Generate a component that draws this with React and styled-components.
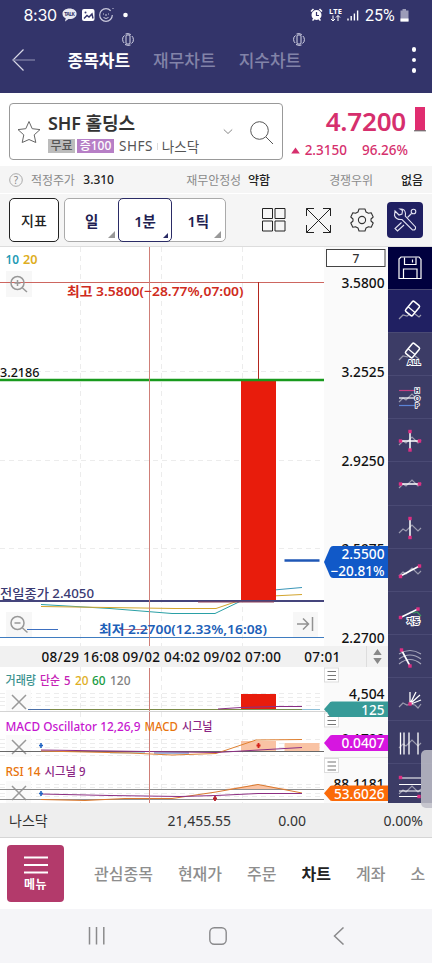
import React, { useState } from 'react'
import styled, { createGlobalStyle } from 'styled-components';

const GlobalStyle = createGlobalStyle`
  * { box-sizing: border-box; }
  body {
    margin: 0;
    background: #fff;
    font-family: "Noto Sans", "Noto Sans CJK KR", sans-serif;
    overflow: hidden;
  }
  button { font-family: inherit; padding: 0; }
`;

const tabs = [
    { name: "종목차트", live: true },
    { name: "재무차트", live: false },
    { name: "지수차트", live: true },
];
const menus = ["관심종목", "현재가", "주문", "차트", "계좌", "소"];

// text inside a chart, squeezed to the width w when given
const Label = ({ x, y, w, size = 12, fill = "#111", weight = 500, end, children }) => (
    <text
        x={x}
        y={y}
        fill={fill}
        fontSize={size}
        fontWeight={weight}
        textAnchor={end ? "end" : "start"}
        textLength={w}
        lengthAdjust="spacingAndGlyphs"
    >
        {children}
    </text>
)

const Grid = ({ xs = [80.5, 161.5, 242.5], ys = [], top, bottom }) => (
    <g stroke="#ececec" strokeDasharray="5 4">
        {xs.map((x) => <path key={x} d={`M${x} ${top}V${bottom}`} />)}
        {ys.map((y) => <path key={y} d={`M0 ${y}H324`} />)}
    </g>
)

const Cross = ({ y }) => (
    <g>
        <rect x="6" y={y - 12} width="25" height="22" fill="#fafafa" />
        <path d={`M12 ${y - 7}l14 14m0 -14l-14 14`} stroke="#999" strokeWidth="1.5" fill="none" />
    </g>
)

const PaneMenu = ({ y }) => (
    <g>
        <rect x="324.5" y={y - 7.5} width="14" height="14" fill="#fff" stroke="#ddd" />
        <path d={`M327.5 ${y - 4}h8.5m-8.5 4h8.5m-8.5 4h8.5`} stroke="#777" strokeWidth="1.2" />
    </g>
)

const Tag = ({ y, h, fill }) => (
    <path d={`M324 ${y + h / 2}L329 ${y + 2}Q330 ${y} 332 ${y}H388V${y + h}H332Q330 ${y + h} 329 ${y + h - 2}Z`} fill={fill} />
)

const RotateIcon = () => (
    <svg width="12" height="13" viewBox="0 0 12 13" fill="none" stroke="#d5d5e6" strokeWidth="1">
        <rect x="4" y="2" width="4" height="9" rx="1" />
        <path d="M2.500 2.500Q.4 4 .6 6.500T2.200 10M9.500 10.500Q11.600 9 11.400 6.500T9.800 3M3.500 1Q6 0 8.800 1.500M3 11.500Q6 13 8.500 12" />
    </svg>
)

const PricePane = () => (
    <Pane height={399} viewBox="0 247 388 399">
        <rect x="324" y="247" width="64" height="399" fill="#fafafa" />
        <Grid ys={[371.5, 460.5, 548.5]} top={247} bottom={646} />
        <rect x="6" y="271" width="26" height="26" fill="#f7f7f7" />
        <path d="M0 282.500H324" stroke="#cd6660" />
        <rect x="241" y="381" width="35" height="219.500" fill="#e81c0c" />
        <path d="M258.500 282V380" stroke="#b3261e" />
        <path d="M0 380H324" stroke="#189a1d" strokeWidth="2.400" />
        <path d="M0 637.500H324" stroke="#3f7cc0" />
        <path d="M28 629.500H58" stroke="#3d6fc0" />
        <path d="M120 629.500H148" stroke="#c4687a" />
        <path d="M41 604.500L110 608.500L172 613.500H215L241 601" stroke="#2aa0a6" fill="none" />
        <path d="M41 606.500L175 608.500H216L238 601" stroke="#d3a52e" fill="none" />
        <path d="M276 589.800L302 587.500" stroke="#3a96b8" fill="none" />
        <path d="M276 595.800L302 594.500" stroke="#d3a52e" fill="none" />
        <path d="M0 601H324" stroke="#45457c" strokeWidth="1.800" />
        <path d="M198 602H274" stroke="#914058" />
        <path d="M284.500 560.500H319.500" stroke="#1f57b6" strokeWidth="2.600" />
        <path d="M149.500 247V646" stroke="#cf7f78" />

        <Label x="5.500" y="264" w="13.500" size="12" weight="600" fill="#1f9bb5">10</Label>
        <Label x="23" y="264" w="14.500" size="12" weight="600" fill="#deae22">20</Label>
        <Label x="67" y="296" w="176.500" size="13" weight="600" fill="#cf2b20">최고 3.5800(−28.77%,07:00)</Label>
        <Label x="0" y="377" w="39.500" size="12">3.2186</Label>
        <Label x="0" y="597.500" w="94" size="13" weight="500" fill="#3a3a72">전일종가 2.4050</Label>
        <Label x="99" y="634" w="168" size="13" weight="600" fill="#1d5fb8">최저 2.2700(12.33%,16:08)</Label>

        {/* zoom in / zoom out / go to last */}
        <g fill="none" stroke="#989898" strokeWidth="1.500">
            <circle cx="17.500" cy="283" r="6.500" />
            <path d="M14.500 283h6M17.500 280v6M22.500 288l4.500 4" />
        </g>
        <rect x="6" y="612" width="26" height="26" fill="#f7f7f7" />
        <path d="M0 637.500H32" stroke="#3f7cc0" />
        <path d="M27 629.500H32" stroke="#3d6fc0" />
        <g fill="none" stroke="#989898" strokeWidth="1.500">
            <circle cx="17.500" cy="623" r="6.500" />
            <path d="M14.500 623h6M22.500 628l5 4.500" />
        </g>
        <rect x="293" y="612" width="25" height="25" fill="#f7f7f7" />
        <path d="M297 624H308M303 618.500L308.500 624L303 629.500M312.500 617V631" fill="none" stroke="#929292" strokeWidth="1.500" />

        <rect x="326.500" y="249.500" width="58.500" height="17" fill="#fff" stroke="#444" />
        <Label x="352.500" y="262.500" size="12" fill="#333">7</Label>
        <Label x="384.500" y="287.500" w="43" size="13.500" end>3.5800</Label>
        <Label x="384.500" y="376.500" w="43" size="13.500" end>3.2525</Label>
        <Label x="384.500" y="465.500" w="43" size="13.500" end>2.9250</Label>
        <Label x="384.500" y="553.500" w="43" size="13.500" end>2.5975</Label>
        <Label x="384.500" y="642.500" w="43" size="13.500" end>2.2700</Label>
        <path d="M324 562L330 548Q331 546 333 546H388V578H333Q331 578 330 576Z" fill="#1159c8" />
        <Label x="384.500" y="558.500" w="43" size="13.500" fill="#fff" end>2.5500</Label>
        <Label x="384.500" y="575.500" w="54" size="13.500" fill="#fff" end>−20.81%</Label>
    </Pane>
)

const VolumePane = () => (
    <Pane height={45} viewBox="0 667 388 45">
        <rect x="324" y="667" width="64" height="45" fill="#fafafa" />
        <Grid ys={[693.5, 697.5, 701.5, 705.5]} top={667} bottom={712} />
        <Cross y={702} />
        <path d="M28 709.500H241" stroke="#7c8b47" />
        <path d="M28 709.500H50" stroke="#4a6fa8" />
        <path d="M276 709.500H320" stroke="#8ec0d8" />
        <rect x="241" y="694" width="35" height="15" fill="#e81c0c" />
        <path d="M218 709L241 707.500L276 706.500H302" stroke="#8a2f86" fill="none" />
        <path d="M241 709.500H302" stroke="#758f53" />
        <path d="M149.500 668V712" stroke="#cf7f78" />
        <path d="M0 711.500H388" stroke="#d4d4d4" />
        <Label x="5.500" y="685" w="30.500" size="12" fill="#3c9290">거래량</Label>
        <Label x="40" y="685" w="20" size="12" fill="#c521b5">단순</Label>
        <Label x="64" y="685" w="6.500" size="12" fill="#c521b5">5</Label>
        <Label x="75" y="685" w="13.500" size="12" fill="#deae22">20</Label>
        <Label x="92" y="685" w="13.500" size="12" fill="#159a3e">60</Label>
        <Label x="110" y="685" w="20.500" size="12" fill="#808080">120</Label>
        <PaneMenu y={675.5} />
        <Label x="384.500" y="698.500" w="35.500" size="13.500" end>4,504</Label>
        <Tag y={701.5} h={15.5} fill="#379b98" />
    </Pane>
)

const MacdPane = () => (
    <Pane height={45} viewBox="0 712 388 45">
        <rect x="324" y="712" width="64" height="45" fill="#fafafa" />
        <Grid ys={[739.5, 743.5, 747.5, 755.5]} top={712} bottom={757} />
        <Cross y={747} />
        <rect x="241" y="741" width="35" height="10.500" fill="#f9c3a4" />
        <rect x="284.500" y="743" width="35" height="8.500" fill="#f9c3a4" />
        <rect x="110" y="752" width="35" height="1.500" fill="#a8cbd6" />
        <rect x="154" y="752" width="35" height="2" fill="#9fb3da" />
        <path d="M0 751.500H324" stroke="#686868" />
        <path d="M41 751L130 753L172 755L216 753.500L256 740L302 739.500" stroke="#df8030" fill="none" />
        <path d="M41 750L216 752.500L302 747.500" stroke="#8c2f83" fill="none" />
        <path d="M39 745.500H43M41 743V748" stroke="#2064c4" strokeWidth="1.600" />
        <path d="M256.500 745.500H260.500M258.500 743V748" stroke="#d6231a" strokeWidth="1.800" />
        <path d="M149.500 712V757" stroke="#cf7f78" />
        <Label x="5.500" y="730.500" w="135" size="12" weight="500" fill="#c615cf">MACD Oscillator 12,26,9</Label>
        <Label x="144.500" y="730.500" w="33.500" size="12" fill="#e8740e">MACD</Label>
        <Label x="182" y="730.500" w="30.500" size="12" fill="#8b2583">시그널</Label>
        <PaneMenu y={720.5} />
        <path d="M324 712H388V717H332Q330 717 329 715.500L327 712Z" fill="#379b98" />
        <Label x="384.500" y="743.500" w="43" size="13.500" end>0.1722</Label>
        <Tag y={735} h={16} fill="#d616e0" />
        <Label x="384.500" y="748" w="43" size="13.500" fill="#fff" end>0.0407</Label>
    </Pane>
)

const RsiPane = () => (
    <Pane height={46} viewBox="0 757 388 46">
        <rect x="324" y="757" width="64" height="46" fill="#fafafa" />
        <path d="M324 757.500H388" stroke="#e6e6e6" />
        <Grid ys={[784.5, 787.5, 793.5, 796.5]} top={757} bottom={803} />
        <path d="M222 789.500L258 784.500L290 789.500Z" fill="#f9c3a4" />
        <Cross y={793} />
        <path d="M0 789.500H324" stroke="#8e8e8e" />
        <path d="M0 799.500H324" stroke="#8e8e8e" />
        <path d="M41 799.500L85 800.500L125 798.500H172L216 792L258 784.500L302 793" stroke="#d9792f" fill="none" />
        <path d="M41 794L110 795.500L180 796.500L216 795.500L258 793.500H302" stroke="#8c2f83" fill="none" />
        <path d="M39 793.500H43M41 791V796" stroke="#2064c4" strokeWidth="1.600" />
        <path d="M213 798.500H217M215 796V801" stroke="#b71f2c" strokeWidth="1.800" />
        <path d="M149.500 757V803" stroke="#cf7f78" />
        <Label x="5.500" y="775.500" w="35" size="12" fill="#e8740e">RSI 14</Label>
        <Label x="44.500" y="775.500" w="41" size="12" fill="#8b2583">시그널 9</Label>
        <PaneMenu y={766} />
        <Label x="384.500" y="789" w="51" size="13.500" end>88.1181</Label>
        <Tag y={785.5} h={15.5} fill="#fb6a08" />
        <Label x="384.500" y="798.500" w="50.500" size="13.500" fill="#fff" end>53.6026</Label>
    </Pane>
)

const wave = "M11 28l4-4 3 2 6-6 6 6 3-3";
const Wave = ({ dy = 0 }) => <path d={wave} transform={`translate(0 ${dy})`} stroke="#9a9aae" />
const Dot = ({ x, y }) => <rect x={x - 1.7} y={y - 1.7} width="3.4" height="3.4" fill="#dc2f83" stroke="none" />
const Eraser = ({ y }) => (
    <g transform={`rotate(40 24.500 ${y})`}>
        <rect x="20" y={y - 6.5} width="9" height="13" rx="1.500" strokeWidth="1.500" />
        <path d={`M20 ${y + 1.5}h9`} strokeWidth="1.200" />
    </g>
)

const tools = [
    { id: "save", bg: "#00003e", icon: (
        <>
            <path d="M13 10H31L33 12.500V31.500H11V12Z" />
            <path d="M16.500 10.500V17.500H28V10.500M24.500 12.500V15.500M15.500 31V22H29V31" />
        </>
    ) },
    { id: "erase", bg: "#202062", icon: <><path d="M11 29l4-4 4 1 3-2m5 0l4 3 2-2" stroke="#9a9aae" /><Eraser y={18.5} /></> },
    { id: "eraseAll", icon: (
        <>
            <path d="M11 27l4-4 5 1m7-1l4 3" stroke="#9a9aae" />
            <Eraser y={17.5} />
            <text x="19.500" y="32" fontSize="7.500" fontWeight="700" fill="#3c3c66" stroke="#fff" strokeWidth="1.800" paintOrder="stroke" textLength="13" lengthAdjust="spacingAndGlyphs">ALL</text>
        </>
    ) },
    { id: "hol", icon: (
        <>
            <Wave dy={-2} />
            <path d="M11 14.500H27" stroke="#c43d80" />
            <path d="M11 22H27" />
            <path d="M11 29.500H27" stroke="#5b83d6" />
            <g fontSize="7" fontWeight="700" fill="#3c3c66" stroke="#fff" strokeWidth="1.600" paintOrder="stroke">
                <text x="26.500" y="17">H</text>
                <text x="26.500" y="24.500">O</text>
                <text x="27" y="32">P</text>
            </g>
        </>
    ) },
    { id: "cross", icon: <><Wave dy={-2} /><path d="M12.500 22H31M22 13V31" strokeWidth="1.500" /><Dot x={12.5} y={22} /><Dot x={31.5} y={22} /><Dot x={22} y={12.5} /><Dot x={22} y={31} /></> },
    { id: "horizontal", icon: <><Wave dy={-2} /><path d="M12.500 22H31" strokeWidth="1.500" /><Dot x={12.5} y={22} /><Dot x={31.5} y={22} /></> },
    { id: "vertical", icon: <><Wave dy={-1} /><path d="M22 13V31" strokeWidth="1.500" /><Dot x={22} y={12.5} /><Dot x={22} y={31.5} /></> },
    { id: "trend", icon: <><Wave dy={-1} /><path d="M12.500 27L31.500 17" strokeWidth="1.500" /><Dot x={12.5} y={27.5} /><Dot x={31.5} y={17} /></> },
    { id: "auto", icon: (
        <>
            <path d="M22 20l4 1 3-1 4 4" stroke="#3b9a63" />
            <path d="M12.500 25.500L30 17" strokeWidth="1.500" />
            <Dot x={12.5} y={25.5} /><Dot x={30} y={17} />
            <text x="19" y="31.500" fontSize="7.500" fontWeight="700" fill="#3c3c66" stroke="#fff" strokeWidth="2" paintOrder="stroke" textLength="13">자동</text>
        </>
    ) },
    { id: "arc", icon: (
        <>
            <path d="M11 19Q22 12 33 19M11 24Q22 16 33 24M11 29Q22 20 33 29" stroke="#a7a7bb" />
            <path d="M13.500 15L22 31" strokeWidth="1.600" />
            <Dot x={13.5} y={15} /><Dot x={22} y={31} />
        </>
    ) },
    { id: "fan", icon: (
        <>
            <path d="M11 29l4-4 4 2 3-1 5 1 3 3 3-4" stroke="#9a9aae" />
            <path d="M22 26V14M23 24L28 14M23 25L32 17M23 26L33 22" strokeWidth="1.300" />
            <Dot x={22} y={26} />
        </>
    ) },
    { id: "cycle", icon: <><Wave dy={-1} /><path d="M12.500 11.500V33.500M16 11.500V33.500M21 11.500V33.500M30 11.500V33.500" strokeWidth="1.300" /></> },
    { id: "channel", icon: <><Wave dy={2} /><path d="M13 14H33M11 20.500H33M11 27H33M11 32.500H31" strokeWidth="1.200" /><Dot x={12.5} y={13.5} /><Dot x={31} y={32.500} /></> },
];

const App = () => {

    const [tab, setTab] = useState("종목차트");
    const [menu, setMenu] = useState("차트");

    return (
        <Phone>
            <GlobalStyle />
            <Header>
                <StatusBar>
                    <Clock>8:30</Clock>
                    <svg width="70" height="16" viewBox="0 0 70 16">
                        <path d="M7.500 1.500C3.500 1.500.5 3.700.5 6.700C.5 8.700 1.700 10.200 3.700 11.200L3 14.500L6.500 12C11.500 12.300 14.600 10 14.600 6.700C14.600 3.700 11.500 1.500 7.500 1.500Z" fill="#e9e9f2" />
                        <text x="2.300" y="8.700" fontSize="5" fontWeight="700" fill="#33346a" textLength="10.500">TALK</text>
                        <rect x="20" y="2" width="12.500" height="12" rx="2" fill="#fff" />
                        <path d="M22 11.500L25 8.500L27 10L30 7L31 11.500" fill="none" stroke="#33346a" strokeWidth="1.400" />
                        <circle cx="23.500" cy="5.500" r="1" fill="#33346a" />
                        <circle cx="44" cy="8" r="6.300" fill="none" stroke="#c9c9dc" strokeWidth="1.200" strokeDasharray="34 6" />
                        <path d="M41.500 6.500v1M46.500 6.500v1M44 7v2M41.500 10.500Q44 12.500 46.500 10.500M51 1v1" fill="none" stroke="#c9c9dc" />
                        <circle cx="63.500" cy="8" r="2.300" fill="#fff" />
                    </svg>
                    <Fill />
                    <svg width="50" height="16" viewBox="0 0 50 16">
                        <circle cx="6.500" cy="8" r="5" fill="#fff" />
                        <path d="M1 4.500L3.500 2M12 4.500L9.500 2M2.500 13.500l1.500-1.500M10.500 13.500L9 12" stroke="#fff" strokeWidth="1.500" />
                        <path d="M6.500 5V8.500H9" fill="none" stroke="#33346a" strokeWidth="1.200" />
                        <text x="19" y="7" fontSize="7.500" fontWeight="700" fill="#fff" textLength="13">LTE</text>
                        <path d="M23 8.500V14M21 12L23 14L25 12M28 14V8.500M26 10.500L28 8.500L30 10.500" fill="none" stroke="#fff" />
                        <path d="M38 13.500V11.500M41.200 13.500V9M44.400 13.500V6.500M47.600 13.500V3.500" stroke="#fff" strokeWidth="1.400" />
                    </svg>
                    <Battery>25%</Battery>
                    <svg width="9" height="13" viewBox="0 0 9 13">
                        <path d="M2.500 0H6V1.500H8.500V12.500H.5V1.500H2.500Z" fill="#9c9cb8" />
                        <rect x=".5" y="9.500" width="8" height="3" fill="#fff" />
                    </svg>
                </StatusBar>
                <TabBar>
                    <svg width="24" height="22" viewBox="0 0 24 22" fill="none">
                        <path d="M11.500 .5L1 11L11.500 21.500" stroke="#d9d9e6" strokeWidth="1.200" />
                        <path d="M1 11H23" stroke="#8687a9" strokeWidth="1.200" />
                    </svg>
                    <TabList>
                        {tabs.map((t) => (
                            <Tab key={t.name} $active={t.name === tab} onClick={() => setTab(t.name)}>
                                {t.name}
                                {t.live && <TabBadge><RotateIcon /></TabBadge>}
                            </Tab>
                        ))}
                    </TabList>
                    <Fill />
                    <Dots><i /><i /><i /></Dots>
                </TabBar>
            </Header>

            <StockRow>
                <SearchBox>
                    <svg width="24" height="24" viewBox="0 0 24 24" fill="none" stroke="#666">
                        <path d="M12 1.500L15.200 8.700L23 9.600L17.200 14.900L18.800 22.500L12 19.500L5.200 22.500L6.800 14.900L1 9.600L8.800 8.700Z" />
                    </svg>
                    <StockInfo>
                        <StockName>SHF 홀딩스</StockName>
                        <StockMeta>
                            <Badge $bg="#bcbcbc" $color="#555" $w={27}>무료</Badge>
                            <Badge $bg="#b77fc6" $color="#fff" $w={37}>증100</Badge>
                            <Code>SHFS</Code>
                            <Divider />
                            <span>나스닥</span>
                        </StockMeta>
                    </StockInfo>
                    <svg width="52" height="26" viewBox="0 0 52 26" fill="none" stroke="#555">
                        <path d="M.8 10.500L5 14.500L9.200 10.500" stroke="#888" />
                        <circle cx="36.500" cy="11.500" r="8.800" />
                        <path d="M43 18L50 25" />
                    </svg>
                </SearchBox>
                <PriceBox>
                    <Price>
                        4.7200
                        <svg width="12" height="25" viewBox="0 0 12 25">
                            <rect x="1" y="0" width="10" height="23.500" fill="#e02d70" />
                            <path d="M0 23.800H12" stroke="#555" />
                        </svg>
                    </Price>
                    <Change>
                        <svg width="9" height="7" viewBox="0 0 9 7"><path d="M4.500 .5L8.800 6.500H.2Z" fill="#d62f6d" /></svg>
                        <span>2.3150</span>
                        <span>96.26%</span>
                    </Change>
                </PriceBox>
            </StockRow>

            <InfoStrip>
                <svg width="14" height="14" viewBox="0 0 14 14">
                    <circle cx="7" cy="7" r="6.300" fill="none" stroke="#aaa" />
                    <text x="7" y="10.500" fontSize="10" textAnchor="middle" fill="#888">?</text>
                </svg>
                <InfoLabel $ml={8}>적정주가</InfoLabel>
                <InfoValue $ml={8.5}>3.310</InfoValue>
                <Fill />
                <InfoLabel>재무안정성</InfoLabel>
                <InfoValue $ml={7}>약함</InfoValue>
                <InfoLabel $ml={59}>경쟁우위</InfoLabel>
                <InfoValue $ml={28}>없음</InfoValue>
            </InfoStrip>

            <Toolbar>
                <IndicatorButton>지표</IndicatorButton>
                <PeriodGroup>
                    <Period>일</Period>
                    <Period $active>1분</Period>
                    <Period>1틱</Period>
                </PeriodGroup>
                <ToolIcons>
                    <svg width="24" height="24" viewBox="0 0 24 24" fill="none" stroke="#222">
                        <path d="M.5 .5H10.500V10.500H.5ZM13 .5H23V10.500H13ZM.5 13H10.500V23H.5ZM13 13H23V23H13Z" />
                    </svg>
                    <svg width="25" height="25" viewBox="0 0 25 25" fill="none" stroke="#222">
                        <path d="M.5 8V.5H8M17 .5H24.500V8M24.500 17V24.500H17M8 24.500H.5V17M.5 .5L24.500 24.500M24.500 .5L.5 24.500" />
                    </svg>
                    <svg width="24" height="24" viewBox="0 0 24 24" fill="none" stroke="#333" strokeWidth="1.100">
                        <path d="M9 1H15L16 4L18.500 5.300L21.200 4.700L23.200 9L21 11V13L23.200 15L21.200 19.300L18.500 18.700L16 20L15 23H9L8 20L5.500 18.700L2.800 19.300L.8 15L3 13V11L.8 9L2.800 4.700L5.500 5.300L8 4Z" strokeLinejoin="round" />
                        <circle cx="12" cy="12" r="3.600" />
                    </svg>
                </ToolIcons>
                <DrawButton>
                    <svg width="24" height="24" viewBox="0 0 24 24" fill="none" stroke="#e4e4f2" strokeWidth="1.100">
                        <path d="M2 3L6 7L9 6L9.500 2.500L7 1Q12 .5 12.500 5.500L12.300 8L22.500 19Q23 22.500 19.500 22L9 11.500Q3 12 1.500 7.500Z" />
                        <path d="M8.500 14.500L2 20.500L4.500 23L11 17M14.500 9.500L18.500 5.500" />
                        <circle cx="20.500" cy="3.500" r="2.300" />
                    </svg>
                </DrawButton>
            </Toolbar>

            <ChartArea>
                <Charts>
                    <PricePane />
                    <TimeAxis>
                        <TimeLabels>
                            <span>08/29 16:08</span>
                            <span>09/02 04:02</span>
                            <span>09/02 07:00</span>
                        </TimeLabels>
                        <LastTime>07:01</LastTime>
                        <Stepper>
                            <svg width="9" height="15" viewBox="0 0 9 15" fill="#888">
                                <path d="M4.500 0L8.700 6H.3ZM4.500 15L.3 9H8.700Z" />
                            </svg>
                        </Stepper>
                    </TimeAxis>
                    <VolumePane />
                    <MacdPane />
                    <RsiPane />
                    <TagOverlay>125</TagOverlay>
                </Charts>
                <ToolRail>
                    {tools.map((t) => (
                        <RailButton key={t.id} $bg={t.bg}>
                            <svg width="44" height="43" viewBox="0 0 44 43" fill="none" stroke="#fff" strokeWidth="1.200">
                                {t.icon}
                            </svg>
                        </RailButton>
                    ))}
                </ToolRail>
                <Handle />
            </ChartArea>

            <IndexBar>
                <IndexName>나스닥</IndexName>
                <span>21,455.55</span>
                <Num $w={75}>0.00</Num>
                <Num $w={117}>0.00%</Num>
            </IndexBar>

            <BottomMenu>
                <MenuButton>
                    <svg width="24" height="18" viewBox="0 0 24 18"><path d="M0 1.500H24M0 9H24M0 16.500H24" stroke="#fff" strokeWidth="1.800" /></svg>
                    메뉴
                </MenuButton>
                {menus.map((m) => (
                    <MenuItem key={m} $active={m === menu} onClick={() => setMenu(m)}>{m}</MenuItem>
                ))}
            </BottomMenu>

            <SystemNav>
                <svg width="18" height="18" viewBox="0 0 18 18"><path d="M1.500 0V17.500M8.500 0V17.500M15.800 0V17.500" stroke="#8a8a8c" strokeWidth="1.500" /></svg>
                <svg width="18" height="18" viewBox="0 0 18 18"><rect x=".8" y=".8" width="16.400" height="16.400" rx="4.500" fill="none" stroke="#8a8a8c" strokeWidth="1.400" /></svg>
                <svg width="18" height="18" viewBox="0 0 18 18"><path d="M13.500 .5L4.500 9L13.500 17.500" fill="none" stroke="#8a8a8c" strokeWidth="1.500" /></svg>
            </SystemNav>
        </Phone>
    )
}

const Phone = styled.div`
  display: flex;
  flex-direction: column;
  width: 432px;
  height: 963px;
  overflow: hidden;
  background: #fff;
`;

const Fill = styled.div`
  flex: 1;
`;

const Header = styled.header`
  height: 93px;
  background: #33346a;
  flex-shrink: 0;
`;

const StatusBar = styled.div`
  display: flex;
  align-items: center;
  height: 30px;
  padding: 0 23px 0 23.5px;
  color: #fff;
`;

const Clock = styled.span`
  font: 400 16px Inter, Roboto, sans-serif;
  width: 38.5px;
  letter-spacing: -0.3px;
`;

const Battery = styled.span`
  font: 400 16px Roboto, sans-serif;
  margin: 0 3px 0 5px;
  width: 32px;
`;

const TabBar = styled.nav`
  display: flex;
  align-items: center;
  height: 60px;
  padding: 0 14px 0 12px;
`;

const TabList = styled.div`
  display: flex;
  gap: 23px;
  margin-left: 31.5px;
  padding-top: 2px;
`;

const Tab = styled.button`
  position: relative;
  border: 0;
  background: none;
  font-size: 17px;
  line-height: 24px;
  font-weight: ${(p) => (p.$active ? 700 : 500)};
  color: ${(p) => (p.$active ? "#fff" : "#8283a8")};
`;

const TabBadge = styled.span`
  position: absolute;
  top: -16px;
  right: -4px;
  display: flex;
`;

const Dots = styled.div`
  display: flex;
  flex-direction: column;
  gap: 6px;
  padding-right: 2px;
  i {
    width: 4.4px;
    height: 4.4px;
    border-radius: 50%;
    background: #fff;
  }
`;

const StockRow = styled.section`
  display: flex;
  height: 73px;
  padding: 10px 6px 7px 9px;
  flex-shrink: 0;
`;

const SearchBox = styled.div`
  display: flex;
  align-items: center;
  width: 273.5px;
  height: 57px;
  padding: 0 7px;
  border: 1px solid #999;
  border-radius: 4px;
`;

const StockInfo = styled.div`
  flex: 1;
  margin-left: 7px;
`;

const StockName = styled.div`
  font-size: 18px;
  font-weight: 600;
  line-height: 24px;
  letter-spacing: -0.1px;
  color: #333;
  margin-top: 1px;
`;

const StockMeta = styled.div`
  display: flex;
  align-items: center;
  margin-top: 4px;
  height: 15px;
  font-size: 13.5px;
  color: #555;
`;

const Badge = styled.span`
  width: ${(p) => p.$w}px;
  height: 14px;
  margin-right: 2px;
  background: ${(p) => p.$bg};
  color: ${(p) => p.$color};
  font-size: 12px;
  line-height: 14px;
  font-weight: 500;
  text-align: center;
  white-space: nowrap;
`;

const Code = styled.span`
  margin-left: 3px;
  letter-spacing: 0.5px;
`;

const Divider = styled.span`
  width: 1px;
  height: 7px;
  margin: 0 4px;
  background: #ddd;
`;

const PriceBox = styled.div`
  flex: 1;
  display: flex;
  flex-direction: column;
  align-items: flex-end;
`;

const Price = styled.div`
  display: flex;
  align-items: center;
  gap: 8px;
  height: 38px;
  font-size: 26px;
  font-weight: 600;
  letter-spacing: -0.2px;
  color: #d62f6d;
  svg { margin-top: -3px; }
`;

const Change = styled.div`
  display: flex;
  align-items: center;
  gap: 15px;
  margin-right: 18px;
  margin-top: 2px;
  height: 20px;
  font-size: 13.5px;
  font-weight: 500;
  color: #d62f6d;
  svg { margin-right: -10px; }
`;

const InfoStrip = styled.div`
  display: flex;
  align-items: center;
  height: 27px;
  padding: 0 9px;
  font-size: 12px;
  background: #f5f5f5;
  flex-shrink: 0;
`;

const InfoLabel = styled.span`
  color: #8b8b8b;
  letter-spacing: -0.1px;
  margin-left: ${(p) => p.$ml || 0}px;
`;

const InfoValue = styled.span`
  color: #222;
  margin-left: ${(p) => p.$ml || 0}px;
  font-weight: 500;
`;

const Toolbar = styled.div`
  display: flex;
  align-items: center;
  height: 54px;
  padding: 0 9px;
  border-top: 1px solid #fff;
  border-bottom: 1px solid #ddd;
  background: #f5f5f5;
  flex-shrink: 0;
`;

const IndicatorButton = styled.button`
  width: 50px;
  height: 44px;
  border: 1px solid #222;
  border-radius: 5px;
  background: #fff;
  font-size: 14px;
  font-weight: 500;
  color: #222;
`;

const PeriodGroup = styled.div`
  display: flex;
  width: 162px;
  height: 44px;
  margin-left: 5px;
  border: 1px solid #aaa;
  border-radius: 5px;
  background: #fff;
`;

const Period = styled.button`
  position: relative;
  width: 54.5px;
  height: 44px;
  margin: -1px -0.5px;
  border: 1px solid ${(p) => (p.$active ? "#2b2c66" : "transparent")};
  border-radius: 5px;
  background: none;
  font-size: 14.5px;
  font-weight: 600;
  color: #1f1f52;

  &::after {
    content: "";
    position: absolute;
    right: 3px;
    bottom: 3px;
    border-style: solid;
    border-width: 0 0 ${(p) => (p.$active ? 5 : 7)}px ${(p) => (p.$active ? 5 : 7)}px;
    border-color: transparent transparent ${(p) => (p.$active ? "#2b2c66" : "#999")} transparent;
  }
`;

const ToolIcons = styled.div`
  display: flex;
  align-items: center;
  gap: 19.5px;
  margin-left: 36px;
`;

const DrawButton = styled.button`
  display: flex;
  align-items: center;
  justify-content: center;
  width: 36px;
  height: 36px;
  margin-left: auto;
  border: 0;
  border-radius: 4px;
  background: #202062;
`;

const ChartArea = styled.section`
  position: relative;
  display: flex;
  height: 556px;
  flex-shrink: 0;
`;

const Charts = styled.div`
  position: relative;
  width: 388px;
`;

const Pane = styled.svg`
  display: block;
  width: 388px;
`;

const TimeAxis = styled.div`
  display: flex;
  align-items: center;
  height: 21px;
  padding-left: 41.5px;
  background: #f1f1f1;
  font-size: 13.5px;
  letter-spacing: 0.33px;
  font-weight: 500;
  color: #111;
  white-space: nowrap;
`;

const TimeLabels = styled.div`
  display: flex;
  gap: 3.5px;
  span { width: 77.5px; }
`;

const LastTime = styled.span`
  margin-left: auto;
  margin-right: 25.5px;
`;

const Stepper = styled.div`
  display: flex;
  align-items: center;
  justify-content: center;
  width: 22px;
  height: 21px;
  border-left: 1px solid #ddd;
`;

const TagOverlay = styled.span`
  position: absolute;
  right: 3.5px;
  top: 454.5px;
  line-height: 16px;
  font-size: 13.5px;
  font-weight: 500;
  color: #fff;
`;

const ToolRail = styled.div`
  width: 44px;
  height: 556px;
  overflow: hidden;
  background: #3c3c66;
`;

const RailButton = styled.button`
  display: block;
  width: 44px;
  height: 43.1px;
  border: 0;
  border-bottom: 1px solid #4a4a74;
  background: ${(p) => p.$bg || "#3c3c66"};
  svg { display: block; }
`;

const Handle = styled.div`
  position: absolute;
  right: 0;
  top: 503px;
  width: 11px;
  height: 58px;
  border-radius: 5px 0 0 5px;
  background: rgba(190, 190, 200, 0.85);
`;

const IndexBar = styled.div`
  display: flex;
  align-items: center;
  height: 35px;
  padding: 0 9px;
  border-bottom: 1px solid #d5d5d5;
  background: #eee;
  font-size: 14px;
  color: #333;
  flex-shrink: 0;
`;

const IndexName = styled.span`
  flex: 1;
`;

const Num = styled.span`
  width: ${(p) => p.$w}px;
  text-align: right;
`;

const BottomMenu = styled.nav`
  display: flex;
  align-items: center;
  gap: 25px;
  height: 71px;
  padding: 0 0 0 7px;
  overflow: hidden;
  flex-shrink: 0;
`;

const MenuButton = styled.button`
  display: flex;
  flex-direction: column;
  align-items: center;
  width: 57px;
  height: 57px;
  margin-right: 5px;
  padding-top: 11px;
  border: 0;
  border-radius: 4px;
  background: #b33a6b;
  color: #fff;
  font-size: 12px;
  font-weight: 700;
  letter-spacing: 0.5px;
  line-height: 21px;
  flex-shrink: 0;
`;

const MenuItem = styled.button`
  border: 0;
  background: none;
  font-size: 16px;
  line-height: 24px;
  white-space: nowrap;
  font-weight: ${(p) => (p.$active ? 700 : 500)};
  color: ${(p) => (p.$active ? "#222" : "#8e8e8e")};
`;

const SystemNav = styled.div`
  flex: 1;
  display: flex;
  justify-content: center;
  gap: 103px;
  padding: 18px 0 0 3px;
  background: #f5f5f8;
`;

export default App;
